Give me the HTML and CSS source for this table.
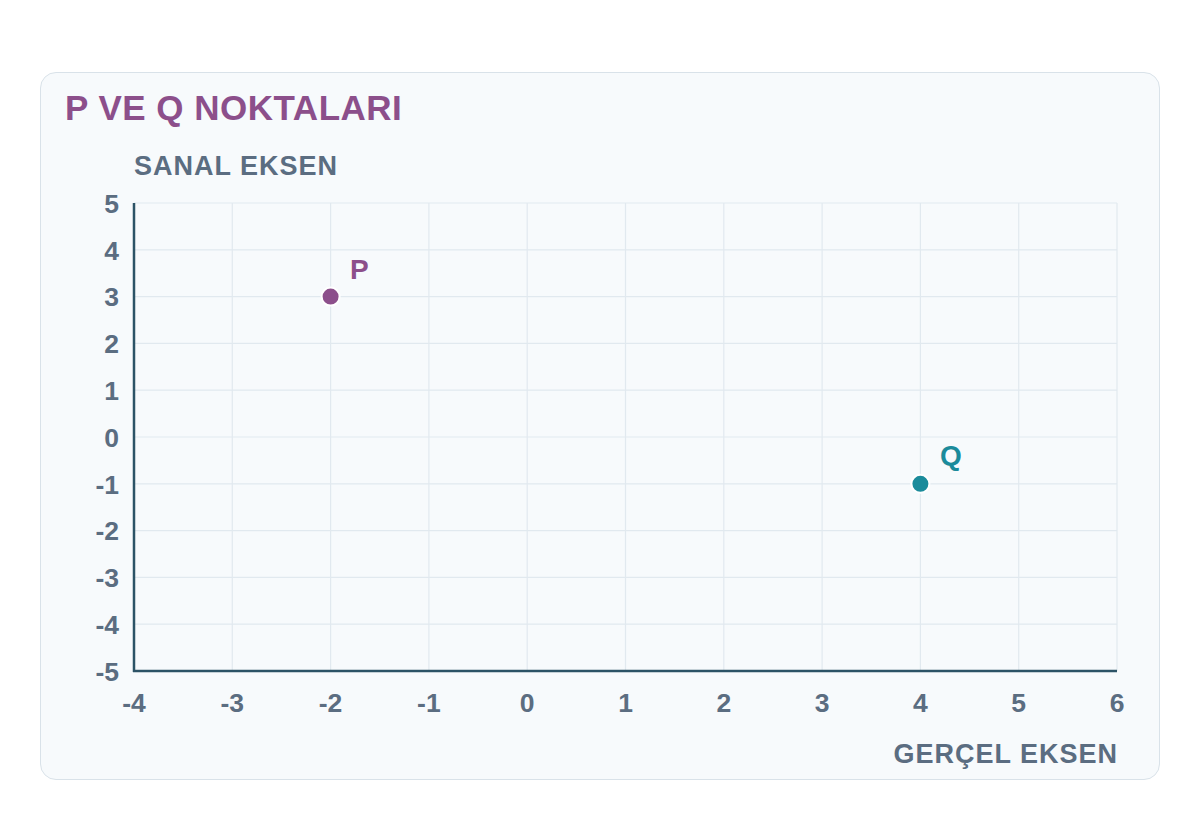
FILE: index.html
```html
<!DOCTYPE html>
<html lang="tr">
<head>
<meta charset="utf-8">
<title>P ve Q Noktaları</title>
<link rel="stylesheet" href="styles.css">
</head>
<body>
<div class="page">
  <section class="card">
    <h1 class="title">P VE Q NOKTALARI</h1>
    <svg class="chart" width="1118" height="653" viewBox="41 125 1118 653" xmlns="http://www.w3.org/2000/svg">
      <g class="grid">
        <line x1="232.3" y1="203" x2="232.3" y2="671"/>
        <line x1="330.6" y1="203" x2="330.6" y2="671"/>
        <line x1="428.9" y1="203" x2="428.9" y2="671"/>
        <line x1="527.2" y1="203" x2="527.2" y2="671"/>
        <line x1="625.5" y1="203" x2="625.5" y2="671"/>
        <line x1="723.8" y1="203" x2="723.8" y2="671"/>
        <line x1="822.1" y1="203" x2="822.1" y2="671"/>
        <line x1="920.4" y1="203" x2="920.4" y2="671"/>
        <line x1="1018.7" y1="203" x2="1018.7" y2="671"/>
        <line x1="1117" y1="203" x2="1117" y2="671"/>
        <line x1="134" y1="203" x2="1117" y2="203"/>
        <line x1="134" y1="249.8" x2="1117" y2="249.8"/>
        <line x1="134" y1="296.6" x2="1117" y2="296.6"/>
        <line x1="134" y1="343.4" x2="1117" y2="343.4"/>
        <line x1="134" y1="390.2" x2="1117" y2="390.2"/>
        <line x1="134" y1="437" x2="1117" y2="437"/>
        <line x1="134" y1="483.8" x2="1117" y2="483.8"/>
        <line x1="134" y1="530.6" x2="1117" y2="530.6"/>
        <line x1="134" y1="577.4" x2="1117" y2="577.4"/>
        <line x1="134" y1="624.2" x2="1117" y2="624.2"/>
      </g>
      <g class="axis">
        <line x1="134" y1="203" x2="134" y2="672"/>
        <line x1="133" y1="671" x2="1117" y2="671"/>
      </g>
      <text class="axis-title" x="134" y="175">SANAL EKSEN</text>
      <text class="axis-title" x="1118" y="763" text-anchor="end">GERÇEL EKSEN</text>
      <g class="tick" text-anchor="end">
        <text x="119" y="213">5</text>
        <text x="119" y="260">4</text>
        <text x="119" y="306">3</text>
        <text x="119" y="353">2</text>
        <text x="119" y="400">1</text>
        <text x="119" y="447">0</text>
        <text x="119" y="494">-1</text>
        <text x="119" y="540">-2</text>
        <text x="119" y="587">-3</text>
        <text x="119" y="634">-4</text>
        <text x="119" y="681">-5</text>
      </g>
      <g class="tick" text-anchor="middle">
        <text x="134" y="712">-4</text>
        <text x="232.3" y="712">-3</text>
        <text x="330.6" y="712">-2</text>
        <text x="428.9" y="712">-1</text>
        <text x="527.2" y="712">0</text>
        <text x="625.5" y="712">1</text>
        <text x="723.8" y="712">2</text>
        <text x="822.1" y="712">3</text>
        <text x="920.4" y="712">4</text>
        <text x="1018.7" y="712">5</text>
        <text x="1117" y="712">6</text>
      </g>
      <circle class="pt pt-p" cx="330.6" cy="296.6" r="9"/>
      <text class="pt-label lbl-p" x="350" y="279">P</text>
      <circle class="pt pt-q" cx="920.4" cy="483.8" r="9"/>
      <text class="pt-label lbl-q" x="940" y="465">Q</text>
    </svg>
  </section>
</div>
</body>
</html>
```
FILE: styles.css
```css
* { box-sizing: border-box; }
html, body { margin: 0; padding: 0; background: #ffffff; }
body { font-family: "Liberation Sans", Arial, sans-serif; }
.page {
  width: 1200px;
  height: 820px;
  padding: 72px 40px 0 40px;
}
.card {
  width: 1120px;
  height: 708px;
  background: #f7fafc;
  border: 1.5px solid #d9e2e9;
  border-radius: 16px;
  display: flex;
  flex-direction: column;
  overflow: hidden;
}
.title {
  margin: 0;
  padding: 17px 0 0 24px;
  font-size: 35px;
  line-height: 35px;
  font-weight: 700;
  letter-spacing: 0.5px;
  color: #8c4f8b;
}
.chart { display: block; }
.grid line { stroke: #e1e9ef; stroke-width: 1.2; }
.axis line { stroke: #2c5366; stroke-width: 2.5; }
.axis-title {
  font-family: "Liberation Sans", Arial, sans-serif;
  font-size: 27px;
  font-weight: 700;
  letter-spacing: 1px;
  fill: #5b6d81;
}
.tick text {
  font-family: "Liberation Sans", Arial, sans-serif;
  font-size: 26.5px;
  font-weight: 700;
  fill: #5b6d81;
}
.pt { stroke: #ffffff; stroke-width: 2; }
.pt-p { fill: #8c4f8b; }
.pt-q { fill: #1b8b9b; }
.pt-label {
  font-family: "Liberation Sans", Arial, sans-serif;
  font-size: 28px;
  font-weight: 700;
}
.lbl-p { fill: #8c4f8b; }
.lbl-q { fill: #1b8b9b; }
```
